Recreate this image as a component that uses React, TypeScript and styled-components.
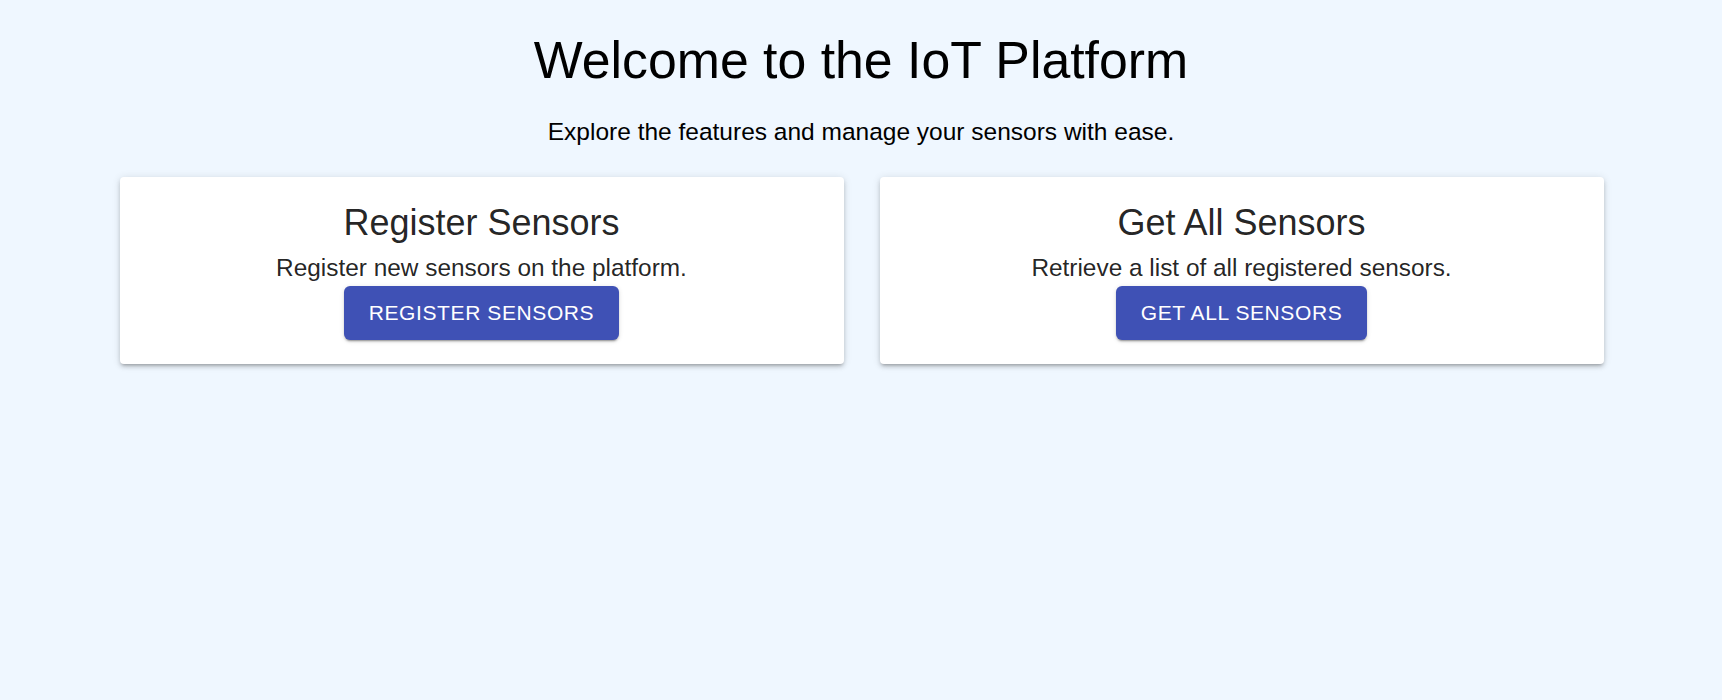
import React from "react";
import styled, { createGlobalStyle } from "styled-components";

const GlobalStyle = createGlobalStyle`
  html, body {
    margin: 0;
    padding: 0;
    background: #eff7ff;
    font-family: "Liberation Sans", Arial, sans-serif;
  }
`;

const features = [
  {
    title: "Register Sensors",
    text: "Register new sensors on the platform.",
    action: "Register Sensors",
  },
  {
    title: "Get All Sensors",
    text: "Retrieve a list of all registered sensors.",
    action: "Get All Sensors",
  },
];

const App = () => {
  return (
    <Page>
      <GlobalStyle />
      <Heading>Welcome to the IoT Platform</Heading>
      <Subtitle>Explore the features and manage your sensors with ease.</Subtitle>
      <CardGrid>
        {features.map((f) => (
          <Card key={f.title}>
            <CardTitle>{f.title}</CardTitle>
            <CardText>{f.text}</CardText>
            <ActionButton type="button">{f.action}</ActionButton>
          </Card>
        ))}
      </CardGrid>
    </Page>
  );
};

export default App;

const Page = styled.div`
  min-height: 700px;
  box-sizing: border-box;
  padding-top: 30px;
  display: flex;
  flex-direction: column;
  align-items: center;
  background: #eff7ff;
`;

const Heading = styled.h1`
  margin: 0;
  font-size: 51.8px;
  font-weight: 400;
  line-height: 1.167;
  color: #000;
`;

const Subtitle = styled.p`
  margin: 24px 0 26px;
  font-size: 24.5px;
  line-height: 1.5;
  color: #000;
`;

const CardGrid = styled.div`
  width: 1484px;
  padding-left: 1px;
  display: grid;
  grid-template-columns: 1fr 1fr;
  gap: 36px;
`;

const Card = styled.div`
  background: #fff;
  border-radius: 4px;
  padding: 24px 16px 24px;
  display: flex;
  flex-direction: column;
  align-items: center;
  box-shadow: 0px 3px 3px -2px rgba(0, 0, 0, 0.2),
    0px 3px 4px 0px rgba(0, 0, 0, 0.14), 0px 1px 8px 0px rgba(0, 0, 0, 0.12);
`;

const CardTitle = styled.h2`
  margin: 0 0 4px;
  font-size: 36px;
  font-weight: 400;
  line-height: 1.235;
  color: rgba(0, 0, 0, 0.87);
`;

const CardText = styled.p`
  margin: 0;
  font-size: 24.4px;
  line-height: 1.5;
  color: rgba(0, 0, 0, 0.87);
`;

const ActionButton = styled.button`
  height: 54px;
  padding: 0 25px;
  border: none;
  border-radius: 6px;
  background: #3f51b5;
  color: #fff;
  font-family: "Liberation Sans", Arial, sans-serif;
  font-size: 21px;
  font-weight: 400;
  letter-spacing: 0.02857em;
  text-transform: uppercase;
  cursor: pointer;
  box-shadow: 0px 3px 1px -2px rgba(0, 0, 0, 0.2),
    0px 2px 2px 0px rgba(0, 0, 0, 0.14), 0px 1px 5px 0px rgba(0, 0, 0, 0.12);
`;
